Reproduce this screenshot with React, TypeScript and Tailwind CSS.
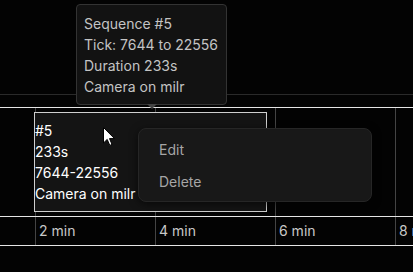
import React from "react";

const ticks = ["2 min", "4 min", "6 min", "8 min"];

function Columns({ children }: { children?: (i: number) => React.ReactNode }) {
  return (
    <div className="flex h-full">
      <div className="w-[35px] shrink-0" />
      {ticks.map((t, i) => (
        <div key={t} className="w-[120px] shrink-0 border-l border-[#444] h-full">
          {children ? children(i) : null}
        </div>
      ))}
    </div>
  );
}

export default function App() {
  return (
    <div className="relative w-[413px] h-[272px] overflow-hidden bg-[#030303] font-['Inter',sans-serif] text-[14px]">
      <div className="h-[94px]" />
      <div className="h-px bg-[#2a2a2a]" />
      <div className="h-[12px]" />
      <div className="h-px bg-[#e5e5e5]" />

      {/* track row */}
      <div className="relative h-[108px]">
        <Columns />
        <div className="absolute left-[34px] top-[4px] w-[233px] h-[100px] border border-[#cfcfcf] bg-[#141414] flex flex-col justify-center text-white leading-[21px]">
          <div>#5</div>
          <div>233s</div>
          <div>7644-22556</div>
          <div>Camera on milr</div>
        </div>
      </div>

      <div className="h-px bg-[#e5e5e5]" />
      {/* axis */}
      <div className="h-[28px]">
        <Columns>
          {(i) => (
            <div className="pl-[3px] leading-[28px] text-[#c8c8c8] whitespace-nowrap">{ticks[i]}</div>
          )}
        </Columns>
      </div>
      <div className="h-px bg-[#e5e5e5]" />

      {/* tooltip */}
      <div className="absolute left-[76px] top-[4px] w-[151px] rounded-[4px] border border-[#333] bg-[#121212] pl-[7px] pt-2 pb-[7px] text-[#c4c4c4] leading-[21px]">
        <div>Sequence #5</div>
        <div>Tick: 7644 to 22556</div>
        <div>Duration 233s</div>
        <div>Camera on milr</div>
        <div className="absolute left-1/2 -translate-x-1/2 -bottom-[5px] w-0 h-0 border-l-[5px] border-r-[5px] border-t-[5px] border-l-transparent border-r-transparent border-t-[#444]" />
      </div>

      {/* context menu */}
      <div className="absolute left-[138px] top-[128px] w-[234px] rounded-lg border border-[#262626] bg-[#181818] p-1 shadow-[0_2px_8px_rgba(0,0,0,0.6)] text-[#a6a6a6]">
        <div className="h-8 px-4 flex items-center">Edit</div>
        <div className="h-8 px-4 flex items-center">Delete</div>
      </div>

      {/* cursor */}
      <svg className="absolute left-[103px] top-[127px]" width="13" height="20" viewBox="0 0 13 20">
        <path d="M0.5 0.5 L0.5 16 L4.2 12.4 L6.8 18.4 L9 17.4 L6.5 11.6 L11.5 11.6 Z" fill="#fff" stroke="#000" strokeWidth="1" />
      </svg>
    </div>
  );
}
